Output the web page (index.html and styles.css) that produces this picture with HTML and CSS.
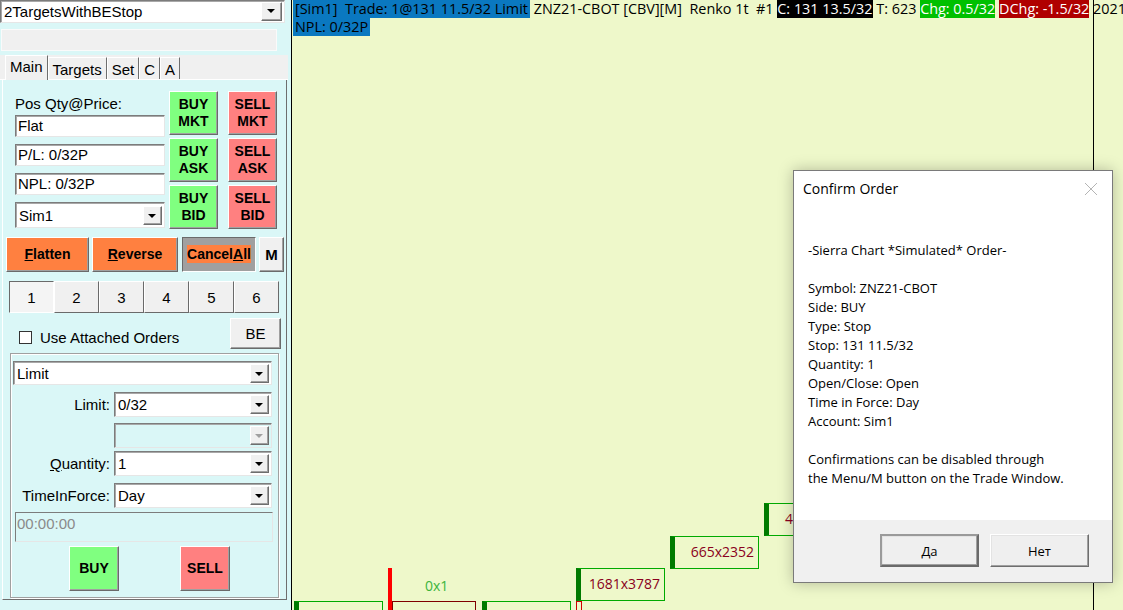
FILE: index.html
```html
<!DOCTYPE html>
<html lang="en">
<head>
    <meta charset="UTF-8">
    <meta name="viewport" content="width=device-width, initial-scale=1.0">
    <link rel="stylesheet" href="styles.css">
    <title>Trade Window - ZNZ21-CBOT</title>
</head>
<body>
    <!-- Trade window docked on the left of the chart -->
    <div class="trade-panel">
        <div class="combo combo-top">
            <span class="combo-text">2TargetsWithBEStop</span>
            <span class="drop"></span>
        </div>
        <div class="status-box"></div>

        <div class="tabs">
            <span class="tab active">Main</span>
            <span class="tab">Targets</span>
            <span class="tab">Set</span>
            <span class="tab">C</span>
            <span class="tab">A</span>
        </div>

        <div class="tab-body">
            <!-- Position info and quick order buttons -->
            <div class="position-row">
                <div class="position-fields">
                    <div class="field-label">Pos Qty@Price:</div>
                    <div class="field">Flat</div>
                    <div class="field">P/L: 0/32P</div>
                    <div class="field">NPL: 0/32P</div>
                    <div class="combo account">
                        <span class="combo-text">Sim1</span>
                        <span class="drop"></span>
                    </div>
                </div>
                <div class="quick-buttons">
                    <button class="btn buy">BUY<br>MKT</button>
                    <button class="btn sell">SELL<br>MKT</button>
                    <button class="btn buy">BUY<br>ASK</button>
                    <button class="btn sell">SELL<br>ASK</button>
                    <button class="btn buy">BUY<br>BID</button>
                    <button class="btn sell">SELL<br>BID</button>
                </div>
            </div>

            <div class="action-row">
                <button class="btn orange flatten"><u>F</u>latten</button>
                <button class="btn orange reverse"><u>R</u>everse</button>
                <button class="btn pressed cancel"><span class="hl">Cancel<u>A</u>ll</span></button>
                <button class="btn plain menu">M</button>
            </div>

            <div class="number-tabs">
                <button class="num active">1</button>
                <button class="num">2</button>
                <button class="num">3</button>
                <button class="num">4</button>
                <button class="num">5</button>
                <button class="num">6</button>
            </div>

            <div class="attached-row">
                <label class="check"><span class="box"></span>Use Attached Orders</label>
                <button class="btn plain be">BE</button>
            </div>

            <!-- Order entry group -->
            <div class="order-group">
                <div class="combo order-type">
                    <span class="combo-text">Limit</span>
                    <span class="drop"></span>
                </div>
                <div class="order-line first">
                    <span class="order-label">Limit:</span>
                    <div class="combo"><span class="combo-text">0/32</span><span class="drop"></span></div>
                </div>
                <div class="order-line second">
                    <span class="order-label"></span>
                    <div class="combo disabled"><span class="combo-text"></span><span class="drop"></span></div>
                </div>
                <div class="order-line third">
                    <span class="order-label"><u>Q</u>uantity:</span>
                    <div class="combo"><span class="combo-text">1</span><span class="drop"></span></div>
                </div>
                <div class="order-line fourth">
                    <span class="order-label">TimeInForce:</span>
                    <div class="combo"><span class="combo-text">Day</span><span class="drop"></span></div>
                </div>
                <div class="time-field">00:00:00</div>
                <div class="submit-row">
                    <button class="btn buy submit">BUY</button>
                    <button class="btn sell submit">SELL</button>
                </div>
            </div>
        </div>
    </div>

    <!-- Chart area -->
    <div class="chart">
        <div class="chart-header">
            <span class="hl-blue">[Sim1]&nbsp; Trade: 1@131 11.5/32 Limit</span> ZNZ21-CBOT [CBV][M]&nbsp; Renko 1t&nbsp; #1 <span class="hl-black">C: 131 13.5/32</span> T: 623 <span class="hl-green">Chg: 0.5/32</span> <span class="hl-red">DChg: -1.5/32</span> 2021
        </div>
        <div class="chart-header"><span class="hl-blue">NPL: 0/32P</span></div>

        <div class="time-line"></div>

        <!-- renko volume boxes -->
        <div class="brick up" style="left: 2px; top: 601px;"></div>
        <div class="red-bar" style="left: 96px; top: 568px;"></div>
        <div class="brick down" style="left: 100px; top: 601px;"></div>
        <div class="brick-label green" style="left: 133px; top: 576px;">0x1</div>
        <div class="brick up" style="left: 190px; top: 601px;"></div>
        <div class="brick down thin" style="left: 284px; top: 601px;"></div>
        <div class="brick up" style="left: 284px; top: 568px;"><span>1681x3787</span></div>
        <div class="brick up" style="left: 378px; top: 536px;"><span>665x2352</span></div>
        <div class="brick up left" style="left: 472px; top: 503px;"><span>4</span></div>
    </div>

    <!-- Order confirmation popup -->
    <div class="dialog">
        <div class="dialog-title">Confirm Order
            <svg class="close" width="14" height="14" viewBox="0 0 14 14">
                <path d="M1 1 L13 13 M13 1 L1 13" stroke="#b4b4b4" stroke-width="1" fill="none"/>
            </svg>
        </div>
        <div class="dialog-body">
            <p>-Sierra Chart *Simulated* Order-</p>
            <p>Symbol: ZNZ21-CBOT<br>Side: BUY<br>Type: Stop<br>Stop: 131 11.5/32<br>Quantity: 1<br>Open/Close: Open<br>Time in Force: Day<br>Account: Sim1</p>
            <p>Confirmations can be disabled through<br>the Menu/M button on the Trade Window.</p>
        </div>
        <div class="dialog-footer">
            <button class="dlg-btn default">Да</button>
            <button class="dlg-btn">Нет</button>
        </div>
    </div>
</body>
</html>
```

FILE: styles.css
```css
* {
    box-sizing: border-box;
}

body {
    margin: 0;
    width: 1123px;
    height: 610px;
    overflow: hidden;
    display: flex;
    position: relative;
    font-family: "Liberation Sans", Arial, sans-serif;
    font-size: 14px;
    background-color: #eef8ca;
}

button {
    font-family: inherit;
    padding: 0;
    margin: 0;
    cursor: pointer;
}

/* ---------- trade panel ---------- */

.trade-panel {
    width: 292px;
    flex: none;
    height: 610px;
    background-color: #daf7f7;
    border-right: 1px solid #000;
}

.combo {
    display: flex;
    align-items: center;
    height: 24px;
    background-color: #fff;
    border: 1px solid;
    border-color: #7c7c7c #e6e6e6 #e6e6e6 #7c7c7c;
    box-shadow: inset 1px 1px 0 #a8a8a8;
    padding: 0 2px 0 3px;
}

.combo-text {
    flex: 1;
    white-space: nowrap;
    overflow: hidden;
}

.drop {
    width: 19px;
    height: 19px;
    background-color: #f0f0f0;
    border: 1px solid;
    border-color: #fff #6e6e6e #6e6e6e #fff;
    box-shadow: inset -1px -1px 0 #a0a0a0;
    position: relative;
}

.drop::after {
    content: "";
    position: absolute;
    left: 4px;
    top: 7px;
    border-left: 4px solid transparent;
    border-right: 4px solid transparent;
    border-top: 4px solid #000;
}

.combo.disabled {
    background-color: #daf7f7;
}

.combo.disabled .drop::after {
    border-top-color: #a0a0a0;
}

.combo-top {
    width: 285px;
    height: 23px;
    font-size: 15px;
}

.combo-top .drop {
    width: 21px;
}

.combo-top .drop::after {
    left: 5px;
    top: 6px;
}

.status-box {
    width: 276px;
    height: 22px;
    margin: 6px 0 0 1px;
    background-color: #f0f0f0;
    border: 1px solid #fafafa;
}

.tabs {
    margin-top: 4px;
    width: 288px;
    height: 25px;
    background-color: #f0f0f0;
    padding-left: 5px;
    display: flex;
    align-items: flex-end;
    border-bottom: 1px solid #fff;
}

.tab {
    height: 22px;
    padding: 3px 4px 0;
    font-size: 15px;
    line-height: 18px;
    border-left: 1px solid #fff;
    border-right: 1px solid #6e6e6e;
    border-top: 1px solid #fff;
}

.tab.active {
    height: 25px;
    padding-top: 2px;
    background-color: #f0f0f0;
    margin-bottom: -1px;
}

.tab-body {
    margin-left: 2px;
    width: 285px;
    height: 520px;
    border-left: 1px solid #fff;
    border-right: 1px solid #6e6e6e;
    border-bottom: 1px solid #6e6e6e;
}

.position-row {
    display: flex;
    padding: 11px 0 0 12px;
}

.position-fields {
    width: 150px;
}

.field-label {
    margin-top: 4px;
    height: 20px;
    font-size: 15px;
}

.field {
    height: 22px;
    margin-bottom: 7px;
    padding: 1px 2px;
    font-size: 15px;
    background-color: #fff;
    border: 1px solid;
    border-color: #7c7c7c #e6e6e6 #e6e6e6 #7c7c7c;
    box-shadow: inset 1px 1px 0 #a8a8a8;
}

.account {
    height: 26px;
    font-size: 15px;
}

.quick-buttons {
    margin-left: 4px;
    display: grid;
    grid-template-columns: 49px 49px;
    grid-template-rows: 44px 44px 44px;
    column-gap: 10px;
    row-gap: 3px;
}

.btn {
    border: 1px solid;
    border-color: #fff #6a6a6a #6a6a6a #fff;
    box-shadow: inset -1px -1px 0 #a0a0a0;
    font-weight: bold;
    font-size: 14px;
    line-height: 17px;
    color: #000;
}

.buy {
    background-color: #80ff80;
}

.sell {
    background-color: #ff8080;
}

.orange {
    background-color: #ff8040;
}

.plain {
    background-color: #f0f0f0;
}

.action-row {
    display: flex;
    gap: 3px;
    margin: 8px 0 0 3px;
    height: 35px;
}

.flatten {
    width: 83px;
}

.reverse {
    width: 86px;
}

.cancel {
    width: 74px;
    margin-left: 1px;
}

.menu {
    width: 25px;
    font-size: 15px;
}

.pressed {
    background-color: #a0a0a0;
    border-color: #6a6a6a #fff #fff #6a6a6a;
    box-shadow: none;
}

.hl {
    background-color: #ff8040;
    padding: 1px 0;
}

.number-tabs {
    display: grid;
    grid-template-columns: repeat(6, 45px);
    height: 32px;
    margin: 9px 0 0 6px;
}

.num {
    background-color: #f0f0f0;
    font-size: 15px;
    border: 1px solid;
    border-color: #fff #6a6a6a #6a6a6a #fff;
}

.num.active {
    border-color: #6a6a6a #fff #fff #6a6a6a;
    background-color: #f4f4f4;
}

.attached-row {
    display: flex;
    align-items: center;
    justify-content: space-between;
    margin: 5px 0 0 16px;
    width: 262px;
    height: 31px;
}

.check {
    display: flex;
    align-items: center;
    gap: 8px;
    font-size: 15px;
    margin-top: 8px;
}

.box {
    width: 13px;
    height: 13px;
    background-color: #fff;
    border: 1px solid #333;
}

.be {
    width: 51px;
    height: 31px;
    font-weight: normal;
    font-size: 15px;
}

/* ---------- order entry group ---------- */

.order-group {
    margin: 4px 0 0 7px;
    width: 269px;
    height: 245px;
    border: 1px solid #a0a0a0;
    box-shadow: 1px 1px 0 #fff, inset 1px 1px 0 #fff;
    padding: 7px 0 0 2px;
}

.order-type {
    width: 259px;
    font-size: 15px;
}

.order-line {
    display: flex;
    align-items: center;
    height: 25px;
}

.order-line.first {
    margin-top: 7px;
}

.order-line.second {
    margin-top: 6px;
}

.order-line.third {
    margin-top: 3px;
}

.order-line.fourth {
    margin-top: 7px;
}

.order-label {
    width: 101px;
    text-align: right;
    padding-right: 4px;
    font-size: 15px;
}

.order-line .combo {
    width: 158px;
    height: 25px;
    font-size: 15px;
}

.time-field {
    margin: 4px 0 0 2px;
    width: 258px;
    height: 30px;
    padding: 2px 1px;
    color: #8a8a8a;
    font-size: 15px;
    border: 1px solid;
    border-color: #7c7c7c #e6e6e6 #e6e6e6 #7c7c7c;
}

.submit-row {
    display: flex;
    gap: 61px;
    margin: 4px 0 0 56px;
}

.submit {
    width: 50px;
    height: 45px;
}

/* ---------- chart ---------- */

.chart {
    flex: 1;
    position: relative;
    padding: 0 0 0 1px;
    font-family: "Open Sans", "Noto Sans", sans-serif;
    font-size: 14.4px;
    color: #000;
    overflow: hidden;
}

.chart-header {
    height: 18px;
    line-height: 18px;
    white-space: nowrap;
}

.hl-blue {
    background-color: #0a78c0;
    padding: 0 2px 0 2px;
}

.hl-black {
    background-color: #000;
    color: #fff;
}

.hl-green {
    background-color: #00c000;
    color: #fff;
}

.hl-red {
    background-color: #b00000;
    color: #fff;
}

.time-line {
    position: absolute;
    left: 801px;
    top: 0;
    width: 1px;
    height: 610px;
    background-color: #000;
}

.brick {
    position: absolute;
    width: 89px;
    height: 33px;
    border: 1px solid #00aa00;
    border-left: 5px solid #007a00;
    color: #8a0020;
    font-size: 14px;
    text-align: right;
    padding: 5px 4px 0 0;
}

.brick.left {
    text-align: left;
    padding-left: 16px;
}

.brick.down {
    width: 84px;
    border-color: #800000;
    border-left: 1px solid #800000;
}

.brick.thin {
    width: 4px;
    border-color: #d00000;
}

.red-bar {
    position: absolute;
    width: 4px;
    height: 42px;
    background-color: #ff0000;
}

.brick-label {
    position: absolute;
    font-size: 14px;
}

.brick-label.green {
    color: #3cb43c;
}

/* ---------- confirmation dialog ---------- */

.dialog {
    position: absolute;
    left: 793px;
    top: 170px;
    width: 320px;
    height: 413px;
    background-color: #fff;
    border: 1px solid #7a7a7a;
    box-shadow: 0 0 14px rgba(0, 0, 0, 0.25);
    font-family: "Open Sans", "Noto Sans", sans-serif;
    font-size: 13px;
    color: #000;
    display: flex;
    flex-direction: column;
}

.dialog-title {
    position: relative;
    padding: 8px 0 0 9px;
    height: 36px;
    font-size: 14px;
}

.close {
    position: absolute;
    right: 14px;
    top: 11px;
}

.dialog-body {
    flex: 1;
    padding: 34px 0 0 14px;
    line-height: 19px;
}

.dialog-body p {
    margin: 0 0 19px;
}

.dialog-footer {
    height: 62px;
    background-color: #f0f0f0;
    display: flex;
    justify-content: flex-end;
    align-items: flex-start;
    gap: 11px;
    padding: 14px 23px 0 0;
}

.dlg-btn {
    width: 99px;
    height: 33px;
    background-color: #efefef;
    font-family: inherit;
    font-size: 13px;
    border: 1px solid;
    border-color: #fff #6e6e6e #6e6e6e #fff;
    box-shadow: inset -1px -1px 0 #a0a0a0, inset 1px 1px 0 #e3e3e3;
}

.dlg-btn.default {
    border: 2px solid #6a6a6a;
    border-top-color: #9a9a9a;
    border-left-color: #9a9a9a;
}
```
